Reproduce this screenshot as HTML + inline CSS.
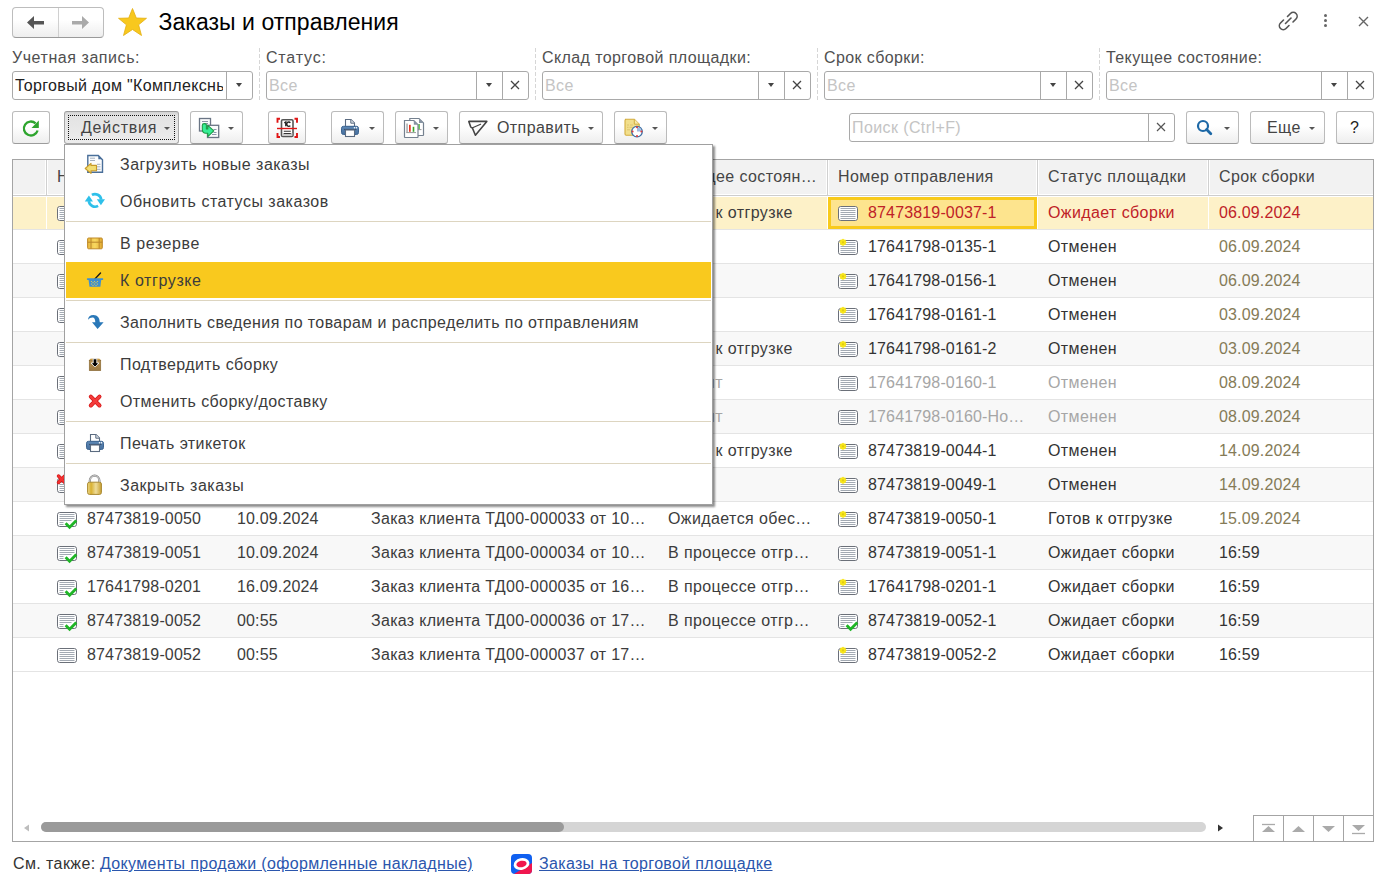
<!DOCTYPE html><html><head><meta charset="utf-8"><title>Заказы и отправления</title><style>
*{box-sizing:border-box}
html,body{margin:0;padding:0}
body{width:1392px;height:885px;overflow:hidden;position:relative;background:#fff;font-family:"Liberation Sans",sans-serif;font-size:16px;letter-spacing:.4px;color:#3c3c3c}
.a{position:absolute}
svg{overflow:visible}
.t{position:absolute;white-space:nowrap;line-height:20px}
.n{letter-spacing:.15px}
.m{letter-spacing:.3px}
.btn{position:absolute;top:111px;height:33px;border:1px solid #bbbbbb;border-bottom-color:#9c9c9c;border-radius:3px;background:linear-gradient(#fff 0,#fff 45%,#eeeeee 100%)}
.fld{position:absolute;height:29px;border:1px solid #a9a9a9;border-radius:3px;background:#fff;overflow:hidden}
.vd{position:absolute;top:0;bottom:0;width:1px;background:#a9a9a9}
.dd{position:absolute;width:0;height:0;border-left:3.5px solid transparent;border-right:3.5px solid transparent;border-top:4px solid #444}
.ds{position:absolute;width:0;height:0;border-left:3px solid transparent;border-right:3px solid transparent;border-top:3px solid #555}
.lbl{position:absolute;top:48px;color:#505050;white-space:nowrap;line-height:20px}
.sep{position:absolute;top:48px;height:52px;width:1px;background:repeating-linear-gradient(#d6d6d6 0 4px,transparent 4px 6px)}
.ph{position:absolute;left:2px;color:#c4c4c4;line-height:20px;white-space:nowrap}
</style></head><body>
<div class="a" style="left:12px;top:7px;width:92px;height:31px;border:1px solid #bdbdbd;border-bottom-color:#9a9a9a;border-radius:4px;background:linear-gradient(#fff 0,#fff 40%,#eeeeee 100%)"></div>
<div class="a" style="left:58px;top:8px;width:1px;height:29px;background:#d0d0d0"></div>
<svg class="a" style="left:26px;top:15px" width="20" height="16" viewBox="0 0 20 16"><path d="M1 7.5 L8 1 L8 6 L18 6 L18 9.5 L8 9.5 L8 14 Z" fill="#555"/></svg>
<svg class="a" style="left:70px;top:15px" width="20" height="16" viewBox="0 0 20 16"><path d="M19 7.5 L12 1 L12 6 L2 6 L2 9.5 L12 9.5 L12 14 Z" fill="#aaa"/></svg>
<svg class="a" style="left:117px;top:7px" width="31" height="30" viewBox="0 0 31 30"><path d="M15.5 1.5 L19.3 11 L29.5 11.3 L21.6 17.8 L24.5 28.5 L15.5 22.5 L6.5 28.5 L9.4 17.8 L1.5 11.3 L11.7 11 Z" fill="#f8c81e" stroke="#e3ae10" stroke-width="0.8" stroke-linejoin="round"/></svg>
<div class="t" style="left:158.5px;top:9px;font-size:23px;line-height:26px;letter-spacing:.05px;color:#000">Заказы и отправления</div>
<svg class="a" style="left:1277px;top:10px" width="23" height="22" viewBox="0 0 23 22"><g fill="none" stroke="#555" stroke-width="1.6" stroke-linecap="round"><path d="M10.5 6.5 L13.5 3.5 A3.3 3.3 0 0 1 19 9 L16 12"/><path d="M12 15.5 L9 18.5 A3.3 3.3 0 0 1 3.5 13 L6.5 10"/><path d="M8.5 13.5 L14 8"/></g></svg>
<div class="a" style="left:1324px;top:14px;width:3px;height:3px;border-radius:50%;background:#666"></div>
<div class="a" style="left:1324px;top:19px;width:3px;height:3px;border-radius:50%;background:#666"></div>
<div class="a" style="left:1324px;top:24px;width:3px;height:3px;border-radius:50%;background:#666"></div>
<svg class="a" style="left:1358px;top:16px" width="11" height="11" viewBox="0 0 11 11"><path d="M1 1 L10 10 M10 1 L1 10" stroke="#666" stroke-width="1.4"/></svg>
<div class="lbl" style="left:12px;letter-spacing:0.56px">Учетная запись:</div>
<div class="lbl" style="left:266px;letter-spacing:0.82px">Статус:</div>
<div class="lbl" style="left:542px;letter-spacing:0.4px">Склад торговой площадки:</div>
<div class="lbl" style="left:824px;letter-spacing:0.4px">Срок сборки:</div>
<div class="lbl" style="left:1106px;letter-spacing:0.4px">Текущее состояние:</div>
<div class="sep" style="left:259px"></div>
<div class="sep" style="left:535px"></div>
<div class="sep" style="left:817px"></div>
<div class="sep" style="left:1099px"></div>
<div class="fld" style="left:12px;top:71px;width:241px">
<div class="t" style="left:2px;top:4px;color:#222;width:208px;overflow:hidden;letter-spacing:.33px">Торговый дом "Комплексные решения"</div>
<div class="vd" style="left:213px"></div>
</div>
<div class="dd" style="left:236.0px;top:83px;border-top-color:#444"></div>
<div class="fld" style="left:266px;top:71px;width:263px">
<div class="ph" style="top:4px">Все</div>
<div class="vd" style="left:209px"></div>
<div class="vd" style="left:235px"></div>
</div>
<div class="dd" style="left:486.0px;top:83px;border-top-color:#444"></div>
<svg class="a" style="left:509px;top:79px" width="12" height="12" viewBox="0 0 12 12"><path d="M2 2 L10 10 M10 2 L2 10" stroke="#444" stroke-width="1.3"/></svg>
<div class="fld" style="left:542px;top:71px;width:269px">
<div class="ph" style="top:4px">Все</div>
<div class="vd" style="left:215px"></div>
<div class="vd" style="left:241px"></div>
</div>
<div class="dd" style="left:768.0px;top:83px;border-top-color:#444"></div>
<svg class="a" style="left:791px;top:79px" width="12" height="12" viewBox="0 0 12 12"><path d="M2 2 L10 10 M10 2 L2 10" stroke="#444" stroke-width="1.3"/></svg>
<div class="fld" style="left:824px;top:71px;width:269px">
<div class="ph" style="top:4px">Все</div>
<div class="vd" style="left:215px"></div>
<div class="vd" style="left:241px"></div>
</div>
<div class="dd" style="left:1050.0px;top:83px;border-top-color:#444"></div>
<svg class="a" style="left:1073px;top:79px" width="12" height="12" viewBox="0 0 12 12"><path d="M2 2 L10 10 M10 2 L2 10" stroke="#444" stroke-width="1.3"/></svg>
<div class="fld" style="left:1106px;top:71px;width:268px">
<div class="ph" style="top:4px">Все</div>
<div class="vd" style="left:214px"></div>
<div class="vd" style="left:240px"></div>
</div>
<div class="dd" style="left:1331.0px;top:83px;border-top-color:#444"></div>
<svg class="a" style="left:1354px;top:79px" width="12" height="12" viewBox="0 0 12 12"><path d="M2 2 L10 10 M10 2 L2 10" stroke="#444" stroke-width="1.3"/></svg>
<div class="btn" style="left:12px;width:38px"></div>
<svg class="a" style="left:16px;top:113px" width="30" height="30" viewBox="0 0 30 30"><path d="M21.6 17.5 A7 7 0 1 1 19.6 10.3" fill="none" stroke="#2ea52e" stroke-width="2.3"/><path d="M22.8 7.5 L22.8 15 L15.5 15 Z" fill="#2ea52e"/></svg>
<div class="btn" style="left:64px;width:115px;background:linear-gradient(#d2d2d2,#e3e3e3 12%,#e8e8e8 60%,#ececec);border-color:#a6a6a6;border-top-color:#999"></div>
<div class="a" style="left:68px;top:115px;width:107px;height:25px;border:1px dotted #111"></div>
<div class="t" style="left:81px;top:118px;color:#444;letter-spacing:.75px">Действия</div>
<div class="ds" style="left:164px;top:127px;border-top-color:#555"></div>
<div class="btn" style="left:190px;width:53px"></div>
<svg class="a" style="left:194px;top:113px" width="30" height="30" viewBox="0 0 30 30"><rect x="5.5" y="5.5" width="11" height="12.5" fill="#fafbfc" stroke="#6a7585" stroke-width="1.3"/><path d="M8 8.5h6M10.5 10.5h3.5" stroke="#8a96a8" stroke-width="1"/><rect x="13.5" y="12.3" width="11.2" height="12.2" fill="#fafbfc" stroke="#6a7585" stroke-width="1.3"/><path d="M19.5 16.5h3M19.5 19.5h3M18 21.5h4.5" stroke="#8a96a8" stroke-width="1"/><path d="M8.3 12.3 Q8.3 10.6 10.3 10.6 Q12.4 10.6 12.4 12.3 L12.4 16 L13.8 16 L13.8 12.4 L19.8 17.9 L13.8 23.6 L13.8 20.2 L11.8 20.2 Q8.3 20.2 8.3 16.3 Z" fill="#36ee96" stroke="#1d9a45" stroke-width="1.1" stroke-linejoin="round"/></svg>
<div class="ds" style="left:228px;top:127px;border-top-color:#555"></div>
<div class="btn" style="left:268px;width:38px"></div>
<svg class="a" style="left:271px;top:113px" width="30" height="30" viewBox="0 0 30 30"><path d="M6.5 9.8 V5.8 H9 M23.5 5.8 H26 V9.8 M26 20 V24 H23.5 M9 24 H6.5 V20" fill="none" stroke="#e01515" stroke-width="1.9"/><rect x="10.5" y="6.8" width="11.5" height="16.7" rx="1.3" fill="#fff" stroke="#555" stroke-width="1.6"/><rect x="11.3" y="20" width="10" height="2.8" fill="#c8c8c8"/><path d="M13.3 9.8 L14.8 9 V13.3" fill="none" stroke="#222" stroke-width="1.4"/><path d="M19.3 9.8 A2 2.2 0 1 0 19.3 12.6" fill="none" stroke="#222" stroke-width="1.4"/><path d="M12.8 18.3h7M12.8 20.5h7" stroke="#333" stroke-width="1.1"/><path d="M6 15.5 H26" stroke="#e01515" stroke-width="1.4"/></svg>
<div class="btn" style="left:331px;width:53px"></div>
<svg class="a" style="left:335px;top:113px" width="30" height="30" viewBox="0 0 30 30"><defs><linearGradient id="pg335" x1="0" y1="0" x2="0" y2="1"><stop offset="0" stop-color="#5f89b6"/><stop offset="1" stop-color="#456f9e"/></linearGradient></defs><path d="M10.5 6.5 H16 L19.5 10 V13.5 H10.5 Z" fill="#fff" stroke="#5b6b80" stroke-width="1.1"/><path d="M15.8 6.5 V10.2 H19.5" fill="#dde3ea" stroke="#5b6b80" stroke-width="1"/><rect x="6.5" y="13.3" width="17" height="8.2" rx="2" fill="url(#pg335)" stroke="#3d6591" stroke-width="1"/><path d="M9 16.5 H21.5" stroke="#3a5270" stroke-width="1.2"/><rect x="10.5" y="17" width="9" height="6.5" fill="#fff" stroke="#5b6b80" stroke-width="1.1"/><circle cx="19.5" cy="14.8" r=".75" fill="#fff"/><circle cx="21.5" cy="14.8" r=".75" fill="#fff"/></svg>
<div class="ds" style="left:369px;top:127px;border-top-color:#555"></div>
<div class="btn" style="left:395px;width:53px"></div>
<svg class="a" style="left:399px;top:113px" width="30" height="30" viewBox="0 0 30 30"><path d="M10.8 5.5 H20 L24.5 10 V22 Q24.5 22.5 24 22.5 H11.3 Q10.8 22.5 10.8 22 Z" fill="#fff" stroke="#75818f" stroke-width="1.2"/><path d="M20 5.5 V10 H24.5 Z" fill="#8794a3"/><rect x="19.3" y="11" width="1.5" height="5.3" fill="#4cbb3a"/><path d="M19 16.6h3.5" stroke="#999" stroke-width="1"/><path d="M5.5 7.5 H14.8 L19 11.7 V24 Q19 24.5 18.5 24.5 H6 Q5.5 24.5 5.5 24 Z" fill="#fff" stroke="#75818f" stroke-width="1.2"/><path d="M14.8 7.5 V11.7 H19 Z" fill="#8794a3"/><rect x="7.3" y="10.5" width="1.5" height="9.2" fill="#aaa"/><rect x="10" y="11.8" width="1.7" height="7" fill="#e8331f"/><rect x="13.7" y="13.8" width="1.6" height="5" fill="#36a82a"/><path d="M7.3 19.6 H17" stroke="#999" stroke-width="1"/></svg>
<div class="ds" style="left:433px;top:127px;border-top-color:#555"></div>
<div class="btn" style="left:459px;width:144px"></div>
<svg class="a" style="left:463px;top:113px" width="30" height="30" viewBox="0 0 30 30"><path d="M5.8 8.4 L23.8 8.4 L12.4 22.2 L9.5 15.3 Q9.2 14.6 8.5 14.4 Q7.9 14.2 7.6 13.6 Z" fill="none" stroke="#444" stroke-width="1.6" stroke-linejoin="round"/><path d="M9.6 14.8 L17.6 11.2" stroke="#444" stroke-width="1.2" stroke-linecap="round"/></svg>
<div class="t" style="left:497px;top:118px;color:#444">Отправить</div>
<div class="ds" style="left:588px;top:127px;border-top-color:#555"></div>
<div class="btn" style="left:614px;width:53px"></div>
<svg class="a" style="left:617px;top:113px" width="30" height="30" viewBox="0 0 30 30"><path d="M8 6.3 H17.3 L22.2 11.2 V21 Q22.2 22.2 21 22.2 H9.2 Q8 22.2 8 21 V7.5 Q8 6.3 9.2 6.3 Z" fill="#f2df8c" stroke="#d3ad3e" stroke-width="1.1"/><path d="M17.3 6.3 V11.2 H22.2" fill="#f7e9ac" stroke="#d3ad3e" stroke-width="1"/><path d="M10 12h2M13 12h3M10 14.3h1.5M12.5 14.3h3M10 16.8h3" stroke="#dcc46f" stroke-width="1"/><circle cx="20" cy="18.6" r="5.3" fill="#fff" stroke="#3c6fa6" stroke-width="1.3"/><path d="M20 18.6 V14.2 A4.4 4.4 0 0 1 24.4 18.6 Z" fill="#9fb9e0"/><circle cx="20" cy="14.2" r="1" fill="#e03a3a"/><circle cx="20" cy="23" r="1" fill="#e03a3a"/><circle cx="15.6" cy="18.6" r="1" fill="#e03a3a"/><circle cx="24.4" cy="18.6" r="1" fill="#e03a3a"/></svg>
<div class="ds" style="left:652px;top:127px;border-top-color:#555"></div>
<div class="fld" style="left:849px;top:113px;width:326px">
<div class="ph" style="top:4px">Поиск (Ctrl+F)</div>
<div class="vd" style="left:298px"></div>
</div>
<svg class="a" style="left:1155px;top:121px" width="12" height="12" viewBox="0 0 12 12"><path d="M2 2 L10 10 M10 2 L2 10" stroke="#555" stroke-width="1.2"/></svg>
<div class="btn" style="left:1186px;width:53px"></div>
<svg class="a" style="left:1195px;top:118px" width="20" height="20" viewBox="0 0 20 20"><circle cx="8" cy="8" r="5" fill="none" stroke="#1d68a6" stroke-width="2.2"/><path d="M11.6 11.6 L15.8 15.8" stroke="#1d68a6" stroke-width="2.8" stroke-linecap="round"/></svg>
<div class="ds" style="left:1224px;top:127px;border-top-color:#555"></div>
<div class="btn" style="left:1250px;width:75px"></div>
<div class="t" style="left:1267px;top:118px;color:#444">Еще</div>
<div class="ds" style="left:1309px;top:127px;border-top-color:#555"></div>
<div class="btn" style="left:1336px;width:38px"></div>
<div class="t" style="left:1350px;top:118px;color:#222">?</div>
<div class="a" style="left:12px;top:159px;width:1362px;height:683px;border:1px solid #a4a4a4;background:#fff"></div>
<div class="a" style="left:13px;top:160px;width:1360px;height:34px;background:#f2f2f2"></div>
<div class="a" style="left:13px;top:195px;width:1360px;height:1px;background:#cdcdcd"></div>
<div class="a" style="left:45px;top:160px;width:3px;height:35px;background:#fff"></div>
<div class="a" style="left:46px;top:160px;width:1px;height:35px;background:#d0d0d0"></div>
<div class="a" style="left:226px;top:160px;width:3px;height:35px;background:#fff"></div>
<div class="a" style="left:227px;top:160px;width:1px;height:35px;background:#d0d0d0"></div>
<div class="a" style="left:360px;top:160px;width:3px;height:35px;background:#fff"></div>
<div class="a" style="left:361px;top:160px;width:1px;height:35px;background:#d0d0d0"></div>
<div class="a" style="left:657px;top:160px;width:3px;height:35px;background:#fff"></div>
<div class="a" style="left:658px;top:160px;width:1px;height:35px;background:#d0d0d0"></div>
<div class="a" style="left:826px;top:160px;width:3px;height:35px;background:#fff"></div>
<div class="a" style="left:827px;top:160px;width:1px;height:35px;background:#d0d0d0"></div>
<div class="a" style="left:1036px;top:160px;width:3px;height:35px;background:#fff"></div>
<div class="a" style="left:1037px;top:160px;width:1px;height:35px;background:#d0d0d0"></div>
<div class="a" style="left:1207px;top:160px;width:3px;height:35px;background:#fff"></div>
<div class="a" style="left:1208px;top:160px;width:1px;height:35px;background:#d0d0d0"></div>
<div class="t" style="left:57px;top:167px;color:#454545;letter-spacing:0.4px">Номер</div>
<div class="t" style="left:237px;top:167px;color:#454545;letter-spacing:0.4px">Дата</div>
<div class="t" style="left:371px;top:167px;color:#454545;letter-spacing:0.4px">Документ</div>
<div class="t" style="left:668px;top:167px;color:#454545;letter-spacing:0.4px">Текущее состоян…</div>
<div class="t" style="left:838px;top:167px;color:#454545;letter-spacing:0.4px">Номер отправления</div>
<div class="t" style="left:1048px;top:167px;color:#454545;letter-spacing:0.61px">Статус площадки</div>
<div class="t" style="left:1219px;top:167px;color:#454545;letter-spacing:0.4px">Срок сборки</div>
<div class="a" style="left:13px;top:197px;width:1360px;height:32px;background:#fdf1c8"></div>
<div class="a" style="left:46px;top:197px;width:1px;height:32px;background:#fff"></div>
<div class="a" style="left:227px;top:197px;width:1px;height:32px;background:#fff"></div>
<div class="a" style="left:361px;top:197px;width:1px;height:32px;background:#fff"></div>
<div class="a" style="left:658px;top:197px;width:1px;height:32px;background:#fff"></div>
<div class="a" style="left:827px;top:197px;width:1px;height:32px;background:#fff"></div>
<div class="a" style="left:1037px;top:197px;width:1px;height:32px;background:#fff"></div>
<div class="a" style="left:1208px;top:197px;width:1px;height:32px;background:#fff"></div>
<div class="a" style="left:828px;top:197px;width:209px;height:32px;border:3px solid #f8ca1c;background:#fde48e"></div>
<div class="a" style="left:13px;top:229px;width:1360px;height:1px;background:#e4e4e4"></div>
<svg class="a" style="left:57px;top:206px" width="22" height="19" viewBox="0 0 22 19"><rect x="0.5" y="0.5" width="19" height="14" rx="2.2" fill="#fff" stroke="#6b7079"/><path d="M2.5 2.5h15M2.5 4.5h15M2.5 6.5h15M2.5 8.5h15M2.5 10.5h15M2.5 12.5h15" stroke="#a3aab3" stroke-width="1"/></svg>
<div class="t n" style="left:87px;top:203px">87473819-0037</div>
<div class="t n" style="left:237px;top:203px">06.09.2024</div>
<div class="t m" style="left:371px;top:203px">Заказ клиента ТД00-000020 от 06…</div>
<div class="t" style="left:668px;top:203px">Готов к отгрузке</div>
<svg class="a" style="left:838px;top:206px" width="22" height="19" viewBox="0 0 22 19"><rect x="0.5" y="0.5" width="19" height="14" rx="2.2" fill="#fff" stroke="#6b7079"/><path d="M2.5 2.5h15M2.5 4.5h15M2.5 6.5h15M2.5 8.5h15M2.5 10.5h15M2.5 12.5h15" stroke="#a3aab3" stroke-width="1"/></svg>
<div class="t n" style="left:868px;top:203px;color:#bf2127">87473819-0037-1</div>
<div class="t" style="left:1048px;top:203px;color:#bf2127">Ожидает сборки</div>
<div class="t n" style="left:1219px;top:203px;color:#bf2127">06.09.2024</div>
<div class="a" style="left:13px;top:263px;width:1360px;height:1px;background:#e4e4e4"></div>
<svg class="a" style="left:57px;top:240px" width="22" height="19" viewBox="0 0 22 19"><rect x="0.5" y="0.5" width="19" height="14" rx="2.2" fill="#fff" stroke="#6b7079"/><path d="M2.5 2.5h15M2.5 4.5h15M2.5 6.5h15M2.5 8.5h15M2.5 10.5h15M2.5 12.5h15" stroke="#a3aab3" stroke-width="1"/></svg>
<div class="t n" style="left:87px;top:237px">17641798-0135</div>
<div class="t n" style="left:237px;top:237px">06.09.2024</div>
<div class="t m" style="left:371px;top:237px">Заказ клиента ТД00-000021 от 06…</div>
<svg class="a" style="left:838px;top:240px" width="22" height="19" viewBox="0 0 22 19"><rect x="0.5" y="0.5" width="19" height="14" rx="2.2" fill="#fff" stroke="#6b7079"/><path d="M2.5 2.5h15M2.5 4.5h15M2.5 6.5h15M2.5 8.5h15M2.5 10.5h15M2.5 12.5h15" stroke="#a3aab3" stroke-width="1"/><g fill="#f7e51b"><circle cx="5" cy="2.3" r="3.1"/><path d="M5 -1.6 L6 0 L4 0 Z M5 6.2 L6 4.6 L4 4.6 Z M1.1 2.3 L2.7 1.3 L2.7 3.3 Z M8.9 2.3 L7.3 1.3 L7.3 3.3 Z M2.2 -0.5 L3.8 0.3 L2.9 1.2 Z M7.8 -0.5 L6.2 0.3 L7.1 1.2 Z M2.2 5.1 L3.8 4.3 L2.9 3.4 Z M7.8 5.1 L6.2 4.3 L7.1 3.4 Z"/></g><circle cx="5" cy="2.3" r="1.1" fill="#e0cc10"/></svg>
<div class="t n" style="left:868px;top:237px;color:#333">17641798-0135-1</div>
<div class="t" style="left:1048px;top:237px;color:#333">Отменен</div>
<div class="t n" style="left:1219px;top:237px;color:#857b57">06.09.2024</div>
<div class="a" style="left:13px;top:264px;width:1360px;height:33px;background:#f8f8f8"></div>
<div class="a" style="left:13px;top:297px;width:1360px;height:1px;background:#e4e4e4"></div>
<svg class="a" style="left:57px;top:274px" width="22" height="19" viewBox="0 0 22 19"><rect x="0.5" y="0.5" width="19" height="14" rx="2.2" fill="#fff" stroke="#6b7079"/><path d="M2.5 2.5h15M2.5 4.5h15M2.5 6.5h15M2.5 8.5h15M2.5 10.5h15M2.5 12.5h15" stroke="#a3aab3" stroke-width="1"/></svg>
<div class="t n" style="left:87px;top:271px">17641798-0156</div>
<div class="t n" style="left:237px;top:271px">06.09.2024</div>
<div class="t m" style="left:371px;top:271px">Заказ клиента ТД00-000022 от 06…</div>
<svg class="a" style="left:838px;top:274px" width="22" height="19" viewBox="0 0 22 19"><rect x="0.5" y="0.5" width="19" height="14" rx="2.2" fill="#fff" stroke="#6b7079"/><path d="M2.5 2.5h15M2.5 4.5h15M2.5 6.5h15M2.5 8.5h15M2.5 10.5h15M2.5 12.5h15" stroke="#a3aab3" stroke-width="1"/><g fill="#f7e51b"><circle cx="5" cy="2.3" r="3.1"/><path d="M5 -1.6 L6 0 L4 0 Z M5 6.2 L6 4.6 L4 4.6 Z M1.1 2.3 L2.7 1.3 L2.7 3.3 Z M8.9 2.3 L7.3 1.3 L7.3 3.3 Z M2.2 -0.5 L3.8 0.3 L2.9 1.2 Z M7.8 -0.5 L6.2 0.3 L7.1 1.2 Z M2.2 5.1 L3.8 4.3 L2.9 3.4 Z M7.8 5.1 L6.2 4.3 L7.1 3.4 Z"/></g><circle cx="5" cy="2.3" r="1.1" fill="#e0cc10"/></svg>
<div class="t n" style="left:868px;top:271px;color:#333">17641798-0156-1</div>
<div class="t" style="left:1048px;top:271px;color:#333">Отменен</div>
<div class="t n" style="left:1219px;top:271px;color:#857b57">06.09.2024</div>
<div class="a" style="left:13px;top:331px;width:1360px;height:1px;background:#e4e4e4"></div>
<svg class="a" style="left:57px;top:308px" width="22" height="19" viewBox="0 0 22 19"><rect x="0.5" y="0.5" width="19" height="14" rx="2.2" fill="#fff" stroke="#6b7079"/><path d="M2.5 2.5h15M2.5 4.5h15M2.5 6.5h15M2.5 8.5h15M2.5 10.5h15M2.5 12.5h15" stroke="#a3aab3" stroke-width="1"/></svg>
<div class="t n" style="left:87px;top:305px">17641798-0161</div>
<div class="t n" style="left:237px;top:305px">03.09.2024</div>
<div class="t m" style="left:371px;top:305px">Заказ клиента ТД00-000023 от 03…</div>
<svg class="a" style="left:838px;top:308px" width="22" height="19" viewBox="0 0 22 19"><rect x="0.5" y="0.5" width="19" height="14" rx="2.2" fill="#fff" stroke="#6b7079"/><path d="M2.5 2.5h15M2.5 4.5h15M2.5 6.5h15M2.5 8.5h15M2.5 10.5h15M2.5 12.5h15" stroke="#a3aab3" stroke-width="1"/><g fill="#f7e51b"><circle cx="5" cy="2.3" r="3.1"/><path d="M5 -1.6 L6 0 L4 0 Z M5 6.2 L6 4.6 L4 4.6 Z M1.1 2.3 L2.7 1.3 L2.7 3.3 Z M8.9 2.3 L7.3 1.3 L7.3 3.3 Z M2.2 -0.5 L3.8 0.3 L2.9 1.2 Z M7.8 -0.5 L6.2 0.3 L7.1 1.2 Z M2.2 5.1 L3.8 4.3 L2.9 3.4 Z M7.8 5.1 L6.2 4.3 L7.1 3.4 Z"/></g><circle cx="5" cy="2.3" r="1.1" fill="#e0cc10"/></svg>
<div class="t n" style="left:868px;top:305px;color:#333">17641798-0161-1</div>
<div class="t" style="left:1048px;top:305px;color:#333">Отменен</div>
<div class="t n" style="left:1219px;top:305px;color:#857b57">03.09.2024</div>
<div class="a" style="left:13px;top:332px;width:1360px;height:33px;background:#f8f8f8"></div>
<div class="a" style="left:13px;top:365px;width:1360px;height:1px;background:#e4e4e4"></div>
<svg class="a" style="left:57px;top:342px" width="22" height="19" viewBox="0 0 22 19"><rect x="0.5" y="0.5" width="19" height="14" rx="2.2" fill="#fff" stroke="#6b7079"/><path d="M2.5 2.5h15M2.5 4.5h15M2.5 6.5h15M2.5 8.5h15M2.5 10.5h15M2.5 12.5h15" stroke="#a3aab3" stroke-width="1"/></svg>
<div class="t n" style="left:87px;top:339px">17641798-0161</div>
<div class="t n" style="left:237px;top:339px">03.09.2024</div>
<div class="t m" style="left:371px;top:339px">Заказ клиента ТД00-000024 от 03…</div>
<div class="t" style="left:668px;top:339px">Готов к отгрузке</div>
<svg class="a" style="left:838px;top:342px" width="22" height="19" viewBox="0 0 22 19"><rect x="0.5" y="0.5" width="19" height="14" rx="2.2" fill="#fff" stroke="#6b7079"/><path d="M2.5 2.5h15M2.5 4.5h15M2.5 6.5h15M2.5 8.5h15M2.5 10.5h15M2.5 12.5h15" stroke="#a3aab3" stroke-width="1"/><g fill="#f7e51b"><circle cx="5" cy="2.3" r="3.1"/><path d="M5 -1.6 L6 0 L4 0 Z M5 6.2 L6 4.6 L4 4.6 Z M1.1 2.3 L2.7 1.3 L2.7 3.3 Z M8.9 2.3 L7.3 1.3 L7.3 3.3 Z M2.2 -0.5 L3.8 0.3 L2.9 1.2 Z M7.8 -0.5 L6.2 0.3 L7.1 1.2 Z M2.2 5.1 L3.8 4.3 L2.9 3.4 Z M7.8 5.1 L6.2 4.3 L7.1 3.4 Z"/></g><circle cx="5" cy="2.3" r="1.1" fill="#e0cc10"/></svg>
<div class="t n" style="left:868px;top:339px;color:#333">17641798-0161-2</div>
<div class="t" style="left:1048px;top:339px;color:#333">Отменен</div>
<div class="t n" style="left:1219px;top:339px;color:#857b57">03.09.2024</div>
<div class="a" style="left:13px;top:399px;width:1360px;height:1px;background:#e4e4e4"></div>
<svg class="a" style="left:57px;top:376px" width="22" height="19" viewBox="0 0 22 19"><rect x="0.5" y="0.5" width="19" height="14" rx="2.2" fill="#fff" stroke="#6b7079"/><path d="M2.5 2.5h15M2.5 4.5h15M2.5 6.5h15M2.5 8.5h15M2.5 10.5h15M2.5 12.5h15" stroke="#a3aab3" stroke-width="1"/></svg>
<div class="t n" style="left:87px;top:373px">17641798-0160</div>
<div class="t n" style="left:237px;top:373px">08.09.2024</div>
<div class="t m" style="left:371px;top:373px">Заказ клиента ТД00-000025 от 08…</div>
<div class="t" style="left:706px;top:373px;color:#a6a6a6">нт</div>
<svg class="a" style="left:838px;top:376px" width="22" height="19" viewBox="0 0 22 19"><rect x="0.5" y="0.5" width="19" height="14" rx="2.2" fill="#fff" stroke="#6b7079"/><path d="M2.5 2.5h15M2.5 4.5h15M2.5 6.5h15M2.5 8.5h15M2.5 10.5h15M2.5 12.5h15" stroke="#a3aab3" stroke-width="1"/></svg>
<div class="t n" style="left:868px;top:373px;color:#a6a6a6">17641798-0160-1</div>
<div class="t" style="left:1048px;top:373px;color:#a6a6a6">Отменен</div>
<div class="t n" style="left:1219px;top:373px;color:#857b57">08.09.2024</div>
<div class="a" style="left:13px;top:400px;width:1360px;height:33px;background:#f8f8f8"></div>
<div class="a" style="left:13px;top:433px;width:1360px;height:1px;background:#e4e4e4"></div>
<svg class="a" style="left:57px;top:410px" width="22" height="19" viewBox="0 0 22 19"><rect x="0.5" y="0.5" width="19" height="14" rx="2.2" fill="#fff" stroke="#6b7079"/><path d="M2.5 2.5h15M2.5 4.5h15M2.5 6.5h15M2.5 8.5h15M2.5 10.5h15M2.5 12.5h15" stroke="#a3aab3" stroke-width="1"/></svg>
<div class="t n" style="left:87px;top:407px">17641798-0160</div>
<div class="t n" style="left:237px;top:407px">08.09.2024</div>
<div class="t m" style="left:371px;top:407px">Заказ клиента ТД00-000026 от 08…</div>
<div class="t" style="left:706px;top:407px;color:#a6a6a6">нт</div>
<svg class="a" style="left:838px;top:410px" width="22" height="19" viewBox="0 0 22 19"><rect x="0.5" y="0.5" width="19" height="14" rx="2.2" fill="#fff" stroke="#6b7079"/><path d="M2.5 2.5h15M2.5 4.5h15M2.5 6.5h15M2.5 8.5h15M2.5 10.5h15M2.5 12.5h15" stroke="#a3aab3" stroke-width="1"/></svg>
<div class="t n" style="left:868px;top:407px;color:#a6a6a6">17641798-0160-Но…</div>
<div class="t" style="left:1048px;top:407px;color:#a6a6a6">Отменен</div>
<div class="t n" style="left:1219px;top:407px;color:#857b57">08.09.2024</div>
<div class="a" style="left:13px;top:467px;width:1360px;height:1px;background:#e4e4e4"></div>
<svg class="a" style="left:57px;top:444px" width="22" height="19" viewBox="0 0 22 19"><rect x="0.5" y="0.5" width="19" height="14" rx="2.2" fill="#fff" stroke="#6b7079"/><path d="M2.5 2.5h15M2.5 4.5h15M2.5 6.5h15M2.5 8.5h15M2.5 10.5h15M2.5 12.5h15" stroke="#a3aab3" stroke-width="1"/></svg>
<div class="t n" style="left:87px;top:441px">87473819-0044</div>
<div class="t n" style="left:237px;top:441px">14.09.2024</div>
<div class="t m" style="left:371px;top:441px">Заказ клиента ТД00-000027 от 14…</div>
<div class="t" style="left:668px;top:441px">Готов к отгрузке</div>
<svg class="a" style="left:838px;top:444px" width="22" height="19" viewBox="0 0 22 19"><rect x="0.5" y="0.5" width="19" height="14" rx="2.2" fill="#fff" stroke="#6b7079"/><path d="M2.5 2.5h15M2.5 4.5h15M2.5 6.5h15M2.5 8.5h15M2.5 10.5h15M2.5 12.5h15" stroke="#a3aab3" stroke-width="1"/><g fill="#f7e51b"><circle cx="5" cy="2.3" r="3.1"/><path d="M5 -1.6 L6 0 L4 0 Z M5 6.2 L6 4.6 L4 4.6 Z M1.1 2.3 L2.7 1.3 L2.7 3.3 Z M8.9 2.3 L7.3 1.3 L7.3 3.3 Z M2.2 -0.5 L3.8 0.3 L2.9 1.2 Z M7.8 -0.5 L6.2 0.3 L7.1 1.2 Z M2.2 5.1 L3.8 4.3 L2.9 3.4 Z M7.8 5.1 L6.2 4.3 L7.1 3.4 Z"/></g><circle cx="5" cy="2.3" r="1.1" fill="#e0cc10"/></svg>
<div class="t n" style="left:868px;top:441px;color:#333">87473819-0044-1</div>
<div class="t" style="left:1048px;top:441px;color:#333">Отменен</div>
<div class="t n" style="left:1219px;top:441px;color:#857b57">14.09.2024</div>
<div class="a" style="left:13px;top:468px;width:1360px;height:33px;background:#f8f8f8"></div>
<div class="a" style="left:13px;top:501px;width:1360px;height:1px;background:#e4e4e4"></div>
<svg class="a" style="left:57px;top:478px" width="22" height="19" viewBox="0 0 22 19"><rect x="0.5" y="0.5" width="19" height="14" rx="2.2" fill="#fff" stroke="#6b7079"/><path d="M2.5 2.5h15M2.5 4.5h15M2.5 6.5h15M2.5 8.5h15M2.5 10.5h15M2.5 12.5h15" stroke="#a3aab3" stroke-width="1"/><path d="M1.5 -2 L7.8 4.5 M7.8 -2 L1.5 4.5" stroke="#d01818" stroke-width="3.4" stroke-linecap="round"/><path d="M1.5 -2 L7.8 4.5 M7.8 -2 L1.5 4.5" stroke="#f43030" stroke-width="2.2" stroke-linecap="round"/></svg>
<div class="t n" style="left:87px;top:475px">87473819-0049</div>
<div class="t n" style="left:237px;top:475px">14.09.2024</div>
<div class="t m" style="left:371px;top:475px">Заказ клиента ТД00-000028 от 14…</div>
<svg class="a" style="left:838px;top:478px" width="22" height="19" viewBox="0 0 22 19"><rect x="0.5" y="0.5" width="19" height="14" rx="2.2" fill="#fff" stroke="#6b7079"/><path d="M2.5 2.5h15M2.5 4.5h15M2.5 6.5h15M2.5 8.5h15M2.5 10.5h15M2.5 12.5h15" stroke="#a3aab3" stroke-width="1"/><g fill="#f7e51b"><circle cx="5" cy="2.3" r="3.1"/><path d="M5 -1.6 L6 0 L4 0 Z M5 6.2 L6 4.6 L4 4.6 Z M1.1 2.3 L2.7 1.3 L2.7 3.3 Z M8.9 2.3 L7.3 1.3 L7.3 3.3 Z M2.2 -0.5 L3.8 0.3 L2.9 1.2 Z M7.8 -0.5 L6.2 0.3 L7.1 1.2 Z M2.2 5.1 L3.8 4.3 L2.9 3.4 Z M7.8 5.1 L6.2 4.3 L7.1 3.4 Z"/></g><circle cx="5" cy="2.3" r="1.1" fill="#e0cc10"/></svg>
<div class="t n" style="left:868px;top:475px;color:#333">87473819-0049-1</div>
<div class="t" style="left:1048px;top:475px;color:#333">Отменен</div>
<div class="t n" style="left:1219px;top:475px;color:#857b57">14.09.2024</div>
<div class="a" style="left:13px;top:535px;width:1360px;height:1px;background:#e4e4e4"></div>
<svg class="a" style="left:57px;top:512px" width="22" height="19" viewBox="0 0 22 19"><rect x="0.5" y="0.5" width="19" height="14" rx="2.2" fill="#fff" stroke="#6b7079"/><path d="M2.5 2.5h15M2.5 4.5h15M2.5 6.5h15M2.5 8.5h12M2.5 10.5h4M2.5 12.5h4" stroke="#a3aab3" stroke-width="1"/><path d="M8.6 11.2 L12.6 15.3 L19.3 8.6" fill="none" stroke="#1fb526" stroke-width="2.8" stroke-linejoin="miter"/></svg>
<div class="t n" style="left:87px;top:509px">87473819-0050</div>
<div class="t n" style="left:237px;top:509px">10.09.2024</div>
<div class="t m" style="left:371px;top:509px">Заказ клиента ТД00-000033 от 10…</div>
<div class="t" style="left:668px;top:509px">Ожидается обес…</div>
<svg class="a" style="left:838px;top:512px" width="22" height="19" viewBox="0 0 22 19"><rect x="0.5" y="0.5" width="19" height="14" rx="2.2" fill="#fff" stroke="#6b7079"/><path d="M2.5 2.5h15M2.5 4.5h15M2.5 6.5h15M2.5 8.5h15M2.5 10.5h15M2.5 12.5h15" stroke="#a3aab3" stroke-width="1"/><g fill="#f7e51b"><circle cx="5" cy="2.3" r="3.1"/><path d="M5 -1.6 L6 0 L4 0 Z M5 6.2 L6 4.6 L4 4.6 Z M1.1 2.3 L2.7 1.3 L2.7 3.3 Z M8.9 2.3 L7.3 1.3 L7.3 3.3 Z M2.2 -0.5 L3.8 0.3 L2.9 1.2 Z M7.8 -0.5 L6.2 0.3 L7.1 1.2 Z M2.2 5.1 L3.8 4.3 L2.9 3.4 Z M7.8 5.1 L6.2 4.3 L7.1 3.4 Z"/></g><circle cx="5" cy="2.3" r="1.1" fill="#e0cc10"/></svg>
<div class="t n" style="left:868px;top:509px;color:#333">87473819-0050-1</div>
<div class="t" style="left:1048px;top:509px;color:#333">Готов к отгрузке</div>
<div class="t n" style="left:1219px;top:509px;color:#857b57">15.09.2024</div>
<div class="a" style="left:13px;top:536px;width:1360px;height:33px;background:#f8f8f8"></div>
<div class="a" style="left:13px;top:569px;width:1360px;height:1px;background:#e4e4e4"></div>
<svg class="a" style="left:57px;top:546px" width="22" height="19" viewBox="0 0 22 19"><rect x="0.5" y="0.5" width="19" height="14" rx="2.2" fill="#fff" stroke="#6b7079"/><path d="M2.5 2.5h15M2.5 4.5h15M2.5 6.5h15M2.5 8.5h12M2.5 10.5h4M2.5 12.5h4" stroke="#a3aab3" stroke-width="1"/><path d="M8.6 11.2 L12.6 15.3 L19.3 8.6" fill="none" stroke="#1fb526" stroke-width="2.8" stroke-linejoin="miter"/></svg>
<div class="t n" style="left:87px;top:543px">87473819-0051</div>
<div class="t n" style="left:237px;top:543px">10.09.2024</div>
<div class="t m" style="left:371px;top:543px">Заказ клиента ТД00-000034 от 10…</div>
<div class="t" style="left:668px;top:543px">В процессе отгр…</div>
<svg class="a" style="left:838px;top:546px" width="22" height="19" viewBox="0 0 22 19"><rect x="0.5" y="0.5" width="19" height="14" rx="2.2" fill="#fff" stroke="#6b7079"/><path d="M2.5 2.5h15M2.5 4.5h15M2.5 6.5h15M2.5 8.5h15M2.5 10.5h15M2.5 12.5h15" stroke="#a3aab3" stroke-width="1"/></svg>
<div class="t n" style="left:868px;top:543px;color:#333">87473819-0051-1</div>
<div class="t" style="left:1048px;top:543px;color:#333">Ожидает сборки</div>
<div class="t n" style="left:1219px;top:543px;color:#333">16:59</div>
<div class="a" style="left:13px;top:603px;width:1360px;height:1px;background:#e4e4e4"></div>
<svg class="a" style="left:57px;top:580px" width="22" height="19" viewBox="0 0 22 19"><rect x="0.5" y="0.5" width="19" height="14" rx="2.2" fill="#fff" stroke="#6b7079"/><path d="M2.5 2.5h15M2.5 4.5h15M2.5 6.5h15M2.5 8.5h12M2.5 10.5h4M2.5 12.5h4" stroke="#a3aab3" stroke-width="1"/><path d="M8.6 11.2 L12.6 15.3 L19.3 8.6" fill="none" stroke="#1fb526" stroke-width="2.8" stroke-linejoin="miter"/></svg>
<div class="t n" style="left:87px;top:577px">17641798-0201</div>
<div class="t n" style="left:237px;top:577px">16.09.2024</div>
<div class="t m" style="left:371px;top:577px">Заказ клиента ТД00-000035 от 16…</div>
<div class="t" style="left:668px;top:577px">В процессе отгр…</div>
<svg class="a" style="left:838px;top:580px" width="22" height="19" viewBox="0 0 22 19"><rect x="0.5" y="0.5" width="19" height="14" rx="2.2" fill="#fff" stroke="#6b7079"/><path d="M2.5 2.5h15M2.5 4.5h15M2.5 6.5h15M2.5 8.5h15M2.5 10.5h15M2.5 12.5h15" stroke="#a3aab3" stroke-width="1"/><g fill="#f7e51b"><circle cx="5" cy="2.3" r="3.1"/><path d="M5 -1.6 L6 0 L4 0 Z M5 6.2 L6 4.6 L4 4.6 Z M1.1 2.3 L2.7 1.3 L2.7 3.3 Z M8.9 2.3 L7.3 1.3 L7.3 3.3 Z M2.2 -0.5 L3.8 0.3 L2.9 1.2 Z M7.8 -0.5 L6.2 0.3 L7.1 1.2 Z M2.2 5.1 L3.8 4.3 L2.9 3.4 Z M7.8 5.1 L6.2 4.3 L7.1 3.4 Z"/></g><circle cx="5" cy="2.3" r="1.1" fill="#e0cc10"/></svg>
<div class="t n" style="left:868px;top:577px;color:#333">17641798-0201-1</div>
<div class="t" style="left:1048px;top:577px;color:#333">Ожидает сборки</div>
<div class="t n" style="left:1219px;top:577px;color:#333">16:59</div>
<div class="a" style="left:13px;top:604px;width:1360px;height:33px;background:#f8f8f8"></div>
<div class="a" style="left:13px;top:637px;width:1360px;height:1px;background:#e4e4e4"></div>
<svg class="a" style="left:57px;top:614px" width="22" height="19" viewBox="0 0 22 19"><rect x="0.5" y="0.5" width="19" height="14" rx="2.2" fill="#fff" stroke="#6b7079"/><path d="M2.5 2.5h15M2.5 4.5h15M2.5 6.5h15M2.5 8.5h12M2.5 10.5h4M2.5 12.5h4" stroke="#a3aab3" stroke-width="1"/><path d="M8.6 11.2 L12.6 15.3 L19.3 8.6" fill="none" stroke="#1fb526" stroke-width="2.8" stroke-linejoin="miter"/></svg>
<div class="t n" style="left:87px;top:611px">87473819-0052</div>
<div class="t n" style="left:237px;top:611px">00:55</div>
<div class="t m" style="left:371px;top:611px">Заказ клиента ТД00-000036 от 17…</div>
<div class="t" style="left:668px;top:611px">В процессе отгр…</div>
<svg class="a" style="left:838px;top:614px" width="22" height="19" viewBox="0 0 22 19"><rect x="0.5" y="0.5" width="19" height="14" rx="2.2" fill="#fff" stroke="#6b7079"/><path d="M2.5 2.5h15M2.5 4.5h15M2.5 6.5h15M2.5 8.5h12M2.5 10.5h4M2.5 12.5h4" stroke="#a3aab3" stroke-width="1"/><path d="M8.6 11.2 L12.6 15.3 L19.3 8.6" fill="none" stroke="#1fb526" stroke-width="2.8" stroke-linejoin="miter"/></svg>
<div class="t n" style="left:868px;top:611px;color:#333">87473819-0052-1</div>
<div class="t" style="left:1048px;top:611px;color:#333">Ожидает сборки</div>
<div class="t n" style="left:1219px;top:611px;color:#333">16:59</div>
<div class="a" style="left:13px;top:671px;width:1360px;height:1px;background:#e4e4e4"></div>
<svg class="a" style="left:57px;top:648px" width="22" height="19" viewBox="0 0 22 19"><rect x="0.5" y="0.5" width="19" height="14" rx="2.2" fill="#fff" stroke="#6b7079"/><path d="M2.5 2.5h15M2.5 4.5h15M2.5 6.5h15M2.5 8.5h15M2.5 10.5h15M2.5 12.5h15" stroke="#a3aab3" stroke-width="1"/></svg>
<div class="t n" style="left:87px;top:645px">87473819-0052</div>
<div class="t n" style="left:237px;top:645px">00:55</div>
<div class="t m" style="left:371px;top:645px">Заказ клиента ТД00-000037 от 17…</div>
<svg class="a" style="left:838px;top:648px" width="22" height="19" viewBox="0 0 22 19"><rect x="0.5" y="0.5" width="19" height="14" rx="2.2" fill="#fff" stroke="#6b7079"/><path d="M2.5 2.5h15M2.5 4.5h15M2.5 6.5h15M2.5 8.5h15M2.5 10.5h15M2.5 12.5h15" stroke="#a3aab3" stroke-width="1"/><g fill="#f7e51b"><circle cx="5" cy="2.3" r="3.1"/><path d="M5 -1.6 L6 0 L4 0 Z M5 6.2 L6 4.6 L4 4.6 Z M1.1 2.3 L2.7 1.3 L2.7 3.3 Z M8.9 2.3 L7.3 1.3 L7.3 3.3 Z M2.2 -0.5 L3.8 0.3 L2.9 1.2 Z M7.8 -0.5 L6.2 0.3 L7.1 1.2 Z M2.2 5.1 L3.8 4.3 L2.9 3.4 Z M7.8 5.1 L6.2 4.3 L7.1 3.4 Z"/></g><circle cx="5" cy="2.3" r="1.1" fill="#e0cc10"/></svg>
<div class="t n" style="left:868px;top:645px;color:#333">87473819-0052-2</div>
<div class="t" style="left:1048px;top:645px;color:#333">Ожидает сборки</div>
<div class="t n" style="left:1219px;top:645px;color:#333">16:59</div>
<svg class="a" style="left:23px;top:824px" width="8" height="8" viewBox="0 0 8 8"><path d="M1 4 L6 0.5 L6 7.5 Z" fill="#bdbdbd"/></svg>
<div class="a" style="left:41px;top:822px;width:1165px;height:10px;border-radius:5px;background:#d5d5d5"></div>
<div class="a" style="left:41px;top:822px;width:523px;height:10px;border-radius:5px;background:#9a9a9a"></div>
<svg class="a" style="left:1217px;top:824px" width="8" height="8" viewBox="0 0 8 8"><path d="M6 4 L1 0.5 L1 7.5 Z" fill="#333"/></svg>
<div class="a" style="left:1253px;top:815px;width:121px;height:27px;border:1px solid #a4a4a4;background:#fff"></div>
<div class="a" style="left:1283px;top:815px;width:1px;height:27px;background:#a4a4a4"></div>
<div class="a" style="left:1313px;top:815px;width:1px;height:27px;background:#a4a4a4"></div>
<div class="a" style="left:1343px;top:815px;width:1px;height:27px;background:#a4a4a4"></div>
<svg class="a" style="left:1260px;top:820px" width="18" height="16" viewBox="0 0 18 16"><path d="M2 4.5h13" stroke="#aaa" stroke-width="1.3"/><path d="M2 12 L8.5 6 L15 12 Z" fill="#aaa"/></svg>
<svg class="a" style="left:1290px;top:820px" width="18" height="16" viewBox="0 0 18 16"><path d="M2 12 L8.5 6 L15 12 Z" fill="#aaa"/></svg>
<svg class="a" style="left:1320px;top:820px" width="18" height="16" viewBox="0 0 18 16"><path d="M2 6 L8.5 12 L15 6 Z" fill="#aaa"/></svg>
<svg class="a" style="left:1350px;top:820px" width="18" height="16" viewBox="0 0 18 16"><path d="M2 5 L8.5 11 L15 5 Z" fill="#aaa"/><path d="M2 13.5h13" stroke="#aaa" stroke-width="1.3"/></svg>
<div class="t" style="left:13px;top:854px;color:#333">См. также:</div>
<div class="t" style="left:100px;top:854px;color:#2b56ad;letter-spacing:.33px;text-decoration:underline">Документы продажи (оформленные накладные)</div>
<svg class="a" style="left:511px;top:854px" width="21" height="20" viewBox="0 0 21 20"><defs><clipPath id="rr"><rect x="0" y="0" width="21" height="20" rx="4"/></clipPath></defs><g clip-path="url(#rr)"><rect width="21" height="20" fill="#1060f0"/><path d="M3 20 L21 20 L21 9 Z" fill="#f0164e"/><ellipse cx="10.5" cy="10" rx="8" ry="5.8" transform="rotate(-12 10.5 10)" fill="#fff"/><ellipse cx="10.5" cy="10" rx="5.2" ry="3.2" transform="rotate(-12 10.5 10)" fill="#f0164e"/></g></svg>
<div class="t" style="left:539px;top:854px;color:#2b56ad;letter-spacing:.33px;text-decoration:underline">Заказы на торговой площадке</div>
<div class="a" style="left:64px;top:144px;width:649px;height:361px;border:1px solid #a0a0a0;background:#fff;box-shadow:2px 2px 2px rgba(0,0,0,.45)"></div>
<div class="a" style="left:66px;top:221px;width:645px;height:1px;background:#ddd5c0"></div>
<div class="a" style="left:66px;top:300px;width:645px;height:1px;background:#ddd5c0"></div>
<div class="a" style="left:66px;top:342px;width:645px;height:1px;background:#ddd5c0"></div>
<div class="a" style="left:66px;top:421px;width:645px;height:1px;background:#ddd5c0"></div>
<div class="a" style="left:66px;top:463px;width:645px;height:1px;background:#ddd5c0"></div>
<div class="a" style="left:66px;top:262px;width:645px;height:36px;background:#f9c91e"></div>
<div class="t" style="left:120px;top:155px;color:#3c3c3c;letter-spacing:0.47px">Загрузить новые заказы</div>
<svg class="a" style="left:80px;top:150px" width="30" height="30" viewBox="0 0 30 30"><path d="M7.8 5.5 H18.3 L22.5 9.7 V22.3 H7.8 Z" fill="#fbfcfd" stroke="#4a6f9a" stroke-width="1.4"/><path d="M18.3 5.5 V9.2 H22.5 Z" fill="#4a6f9a"/><path d="M10 8.2h5M10 10.5h5M17 14.3h3.5M17 16.8h3.5M17 19.3h3.5" stroke="#a6b1bf" stroke-width="1"/><path d="M5.2 18.5 L11 13.3 V15.4 H16.5 V20.7 H11 V23.4 Z" fill="#f2de74" stroke="#c79a2a" stroke-width="1.1" stroke-linejoin="round"/></svg>
<div class="t" style="left:120px;top:192px;color:#3c3c3c;letter-spacing:0.5px">Обновить статусы заказов</div>
<svg class="a" style="left:80px;top:186px" width="30" height="30" viewBox="0 0 30 30"><path d="M11.9 8.9 A6.3 6.3 0 0 1 21.2 13.6" fill="none" stroke="#2ec0ea" stroke-width="2.7"/><path d="M16.8 13.3 L25 13.3 L20.9 19.2 Z" fill="#2ec0ea"/><path d="M18.1 19.9 A6.3 6.3 0 0 1 8.8 15.2" fill="none" stroke="#2ec0ea" stroke-width="2.7"/><path d="M4.8 15.5 L13 15.5 L8.9 9.6 Z" fill="#2ec0ea"/></svg>
<div class="t" style="left:120px;top:234px;color:#3c3c3c;letter-spacing:0.58px">В резерве</div>
<svg class="a" style="left:80px;top:228px" width="30" height="30" viewBox="0 0 30 30"><defs><linearGradient id="rg" x1="0" y1="0" x2="1" y2="0"><stop offset="0" stop-color="#e8b840"/><stop offset=".5" stop-color="#f8d860"/><stop offset="1" stop-color="#e0a830"/></linearGradient></defs><rect x="7.6" y="10" width="14.7" height="10.8" rx="1" fill="url(#rg)" stroke="#c08a28" stroke-width="1"/><path d="M7.6 14.2 H22.3 M11 10 V20.8 M19.2 10 V20.8" stroke="#b8862a" stroke-width="1"/></svg>
<div class="t" style="left:120px;top:271px;color:#3c3c3c;letter-spacing:0.6px">К отгрузке</div>
<svg class="a" style="left:80px;top:265px" width="30" height="30" viewBox="0 0 30 30"><path d="M14.4 14.5 L20.5 8" stroke="#1a1a1a" stroke-width="1.4" stroke-linecap="round"/><path d="M7.5 13.2 H22.6 Q23.2 13.2 23.2 13.8 V14.3 Q23.2 14.9 22.6 14.9 H21.2 L20.4 21.7 H9.5 L8.6 14.9 H7.5 Q6.9 14.9 6.9 14.3 V13.8 Q6.9 13.2 7.5 13.2 Z" fill="#3f8fd0"/><g fill="#f8d040"><circle cx="11.5" cy="16.5" r=".6"/><circle cx="14.5" cy="16.5" r=".6"/><circle cx="17.5" cy="16.5" r=".6"/><circle cx="13" cy="17.7" r=".6"/><circle cx="16" cy="17.7" r=".6"/><circle cx="11.5" cy="19" r=".6"/><circle cx="14.5" cy="19" r=".6"/><circle cx="17.5" cy="19" r=".6"/><circle cx="13" cy="20.3" r=".6"/><circle cx="16" cy="20.3" r=".6"/></g></svg>
<div class="t" style="left:120px;top:313px;color:#3c3c3c;letter-spacing:0.4px">Заполнить сведения по товарам и распределить по отправлениям</div>
<svg class="a" style="left:80px;top:307px" width="30" height="30" viewBox="0 0 30 30"><path d="M8 12.8 Q8.3 8 13.5 8 Q19.6 8.3 19.8 15.2 L23.6 15.2 L17.6 22 L12 15.2 L15.3 15.2 Q15.2 10.6 12.6 10.4 Q9.8 10.3 8 12.8 Z" fill="#2a78b8"/></svg>
<div class="t" style="left:120px;top:355px;color:#3c3c3c;letter-spacing:0.4px">Подтвердить сборку</div>
<svg class="a" style="left:80px;top:349px" width="30" height="30" viewBox="0 0 30 30"><defs><linearGradient id="cg" x1="0" y1="0" x2="0" y2="1"><stop offset="0" stop-color="#b8904f"/><stop offset="1" stop-color="#9c7a45"/></linearGradient></defs><path d="M9.3 11.6 L10.5 10 H13.3 L13.3 11.6 M16.7 11.6 V10 H19.5 L20.7 11.6" fill="#d6a84e" stroke="#b88830" stroke-width=".6"/><rect x="9.3" y="11.6" width="11.4" height="10" fill="url(#cg)" stroke="#8a6a35" stroke-width=".7"/><path d="M13.2 9.8 H16.8 V14 H19 L15 18 L11 14 H13.2 Z" fill="#000" stroke="#fff" stroke-width=".8" stroke-linejoin="round"/></svg>
<div class="t" style="left:120px;top:392px;color:#3c3c3c;letter-spacing:0.4px">Отменить сборку/доставку</div>
<svg class="a" style="left:80px;top:386px" width="30" height="30" viewBox="0 0 30 30"><path d="M10.8 10.7 L19.5 19.5 M19.5 10.7 L10.8 19.5" stroke="#d41414" stroke-width="4" stroke-linecap="round"/><path d="M10.8 10.7 L19.5 19.5 M19.5 10.7 L10.8 19.5" stroke="#f43c3c" stroke-width="2.6" stroke-linecap="round"/></svg>
<div class="t" style="left:120px;top:434px;color:#3c3c3c;letter-spacing:0.4px">Печать этикеток</div>
<svg class="a" style="left:80px;top:428px" width="30" height="30" viewBox="0 0 30 30"><defs><linearGradient id="pg80" x1="0" y1="0" x2="0" y2="1"><stop offset="0" stop-color="#5f89b6"/><stop offset="1" stop-color="#456f9e"/></linearGradient></defs><path d="M10.5 6.5 H16 L19.5 10 V13.5 H10.5 Z" fill="#fff" stroke="#5b6b80" stroke-width="1.1"/><path d="M15.8 6.5 V10.2 H19.5" fill="#dde3ea" stroke="#5b6b80" stroke-width="1"/><rect x="6.5" y="13.3" width="17" height="8.2" rx="2" fill="url(#pg80)" stroke="#3d6591" stroke-width="1"/><path d="M9 16.5 H21.5" stroke="#3a5270" stroke-width="1.2"/><rect x="10.5" y="17" width="9" height="6.5" fill="#fff" stroke="#5b6b80" stroke-width="1.1"/><circle cx="19.5" cy="14.8" r=".75" fill="#fff"/><circle cx="21.5" cy="14.8" r=".75" fill="#fff"/></svg>
<div class="t" style="left:120px;top:476px;color:#3c3c3c;letter-spacing:0.5px">Закрыть заказы</div>
<svg class="a" style="left:80px;top:470px" width="30" height="30" viewBox="0 0 30 30"><path d="M9.8 12.5 V10.8 A4.7 5 0 0 1 19.4 10.8 V12.5" fill="none" stroke="#808080" stroke-width="2.2"/><path d="M9.8 12.5 V10.8 A4.7 5 0 0 1 19.4 10.8 V12.5" fill="none" stroke="#e6e6e6" stroke-width=".9"/><defs><linearGradient id="lg" x1="0" y1="0" x2="1" y2="0"><stop offset="0" stop-color="#f0dc90"/><stop offset=".25" stop-color="#d8b030"/><stop offset=".6" stop-color="#eedc9a"/><stop offset="1" stop-color="#c8a030"/></linearGradient></defs><rect x="7.6" y="12.2" width="13.8" height="12.2" rx="1.8" fill="url(#lg)" stroke="#a88830" stroke-width="1"/></svg>
</body></html>
